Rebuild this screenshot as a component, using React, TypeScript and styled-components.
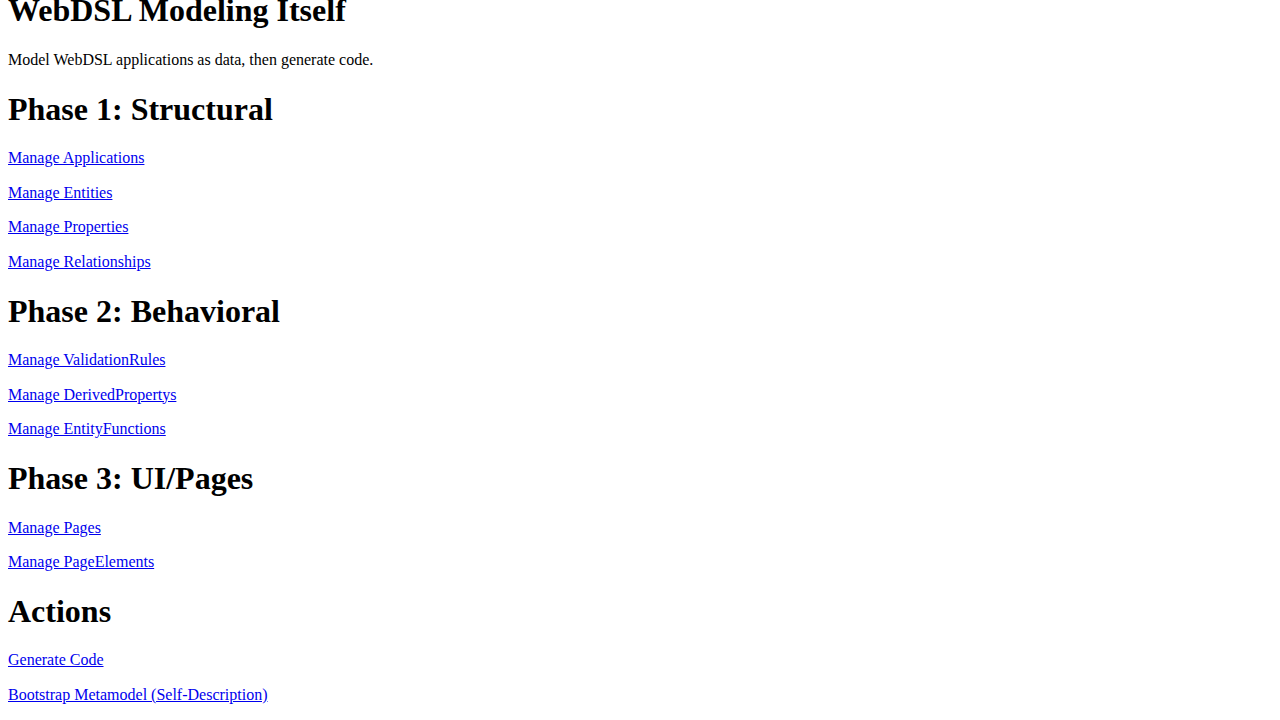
import React from "react";
import styled, { createGlobalStyle } from "styled-components";

const Global = createGlobalStyle`
  html, body { margin: 0; padding: 0; background: #fff; }
  body { font-family: "Liberation Serif", "Times New Roman", serif; font-size: 16px; color: #000; }
`;

const Page = styled.main`
  padding: 8px;
  margin-top: -37px;
`;

const Heading = styled.h1`
  font-size: 32px;
  font-weight: bold;
  margin: 21.44px 0;
  line-height: normal;
`;

const Para = styled.p`
  margin: 16px 0;
  line-height: 18.5px;
`;

const Link = styled.a`
  color: #0000ee;
  text-decoration: underline;
  cursor: pointer;
`;

const sections: { title: string; links: string[] }[] = [
  {
    title: "Phase 1: Structural",
    links: ["Manage Applications", "Manage Entities", "Manage Properties", "Manage Relationships"],
  },
  {
    title: "Phase 2: Behavioral",
    links: ["Manage ValidationRules", "Manage DerivedPropertys", "Manage EntityFunctions"],
  },
  {
    title: "Phase 3: UI/Pages",
    links: ["Manage Pages", "Manage PageElements"],
  },
  {
    title: "Actions",
    links: ["Generate Code", "Bootstrap Metamodel (Self-Description)"],
  },
];

export default function App() {
  return (
    <>
      <Global />
      <Page>
        <Heading>WebDSL Modeling Itself</Heading>
        <Para>Model WebDSL applications as data, then generate code.</Para>
        {sections.map((s) => (
          <section key={s.title}>
            <Heading>{s.title}</Heading>
            {s.links.map((l) => (
              <Para key={l}>
                <Link href="#">{l}</Link>
              </Para>
            ))}
          </section>
        ))}
      </Page>
    </>
  );
}
